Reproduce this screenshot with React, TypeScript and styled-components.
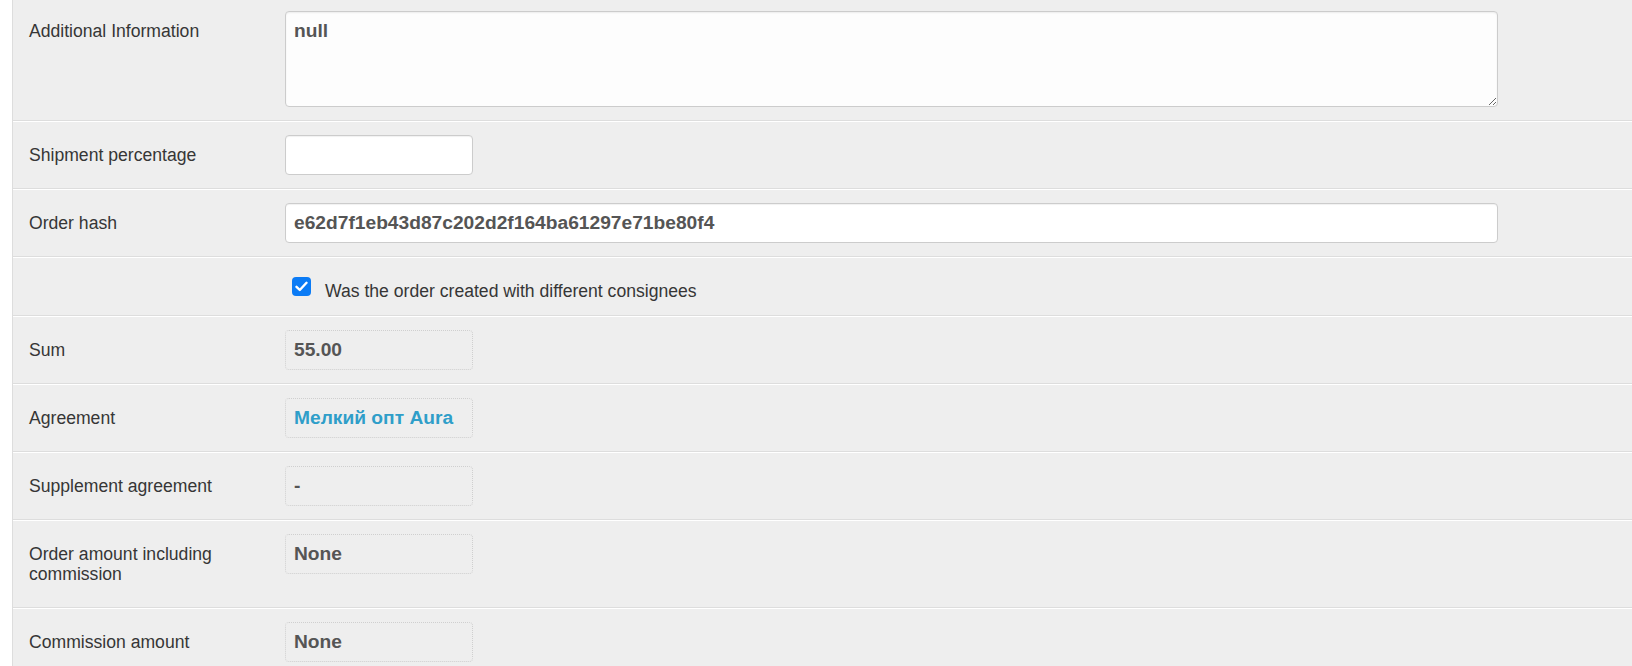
import React from "react";
import styled, { createGlobalStyle } from "styled-components";

const Global = createGlobalStyle`
  html, body {
    margin: 0;
    padding: 0;
    background: #ffffff;
    overflow: hidden;
  }
  body {
    font-family: "Liberation Sans", Arial, Helvetica, sans-serif;
  }
  * { box-sizing: border-box; }
`;

const Page = styled.div`
  padding-left: 12px;
`;

const Fieldset = styled.div`
  margin-top: -3px;
  border-left: 1px solid #dddddd;
  background: #eeeeee;
`;

const Row = styled.div<{ $indent?: boolean }>`
  display: flex;
  align-items: flex-start;
  padding: 13px 16px;
  padding-left: ${(p) => (p.$indent ? "279px" : "16px")};
  border-top: 1px solid #ffffff;
  border-bottom: 1px solid #dddddd;
`;

const Label = styled.div`
  flex: 0 0 256px;
  padding: 10px 20px 10px 0;
  font-size: 17.6px;
  line-height: 20px;
  color: #363636;
`;

const valueFont = `
  font-family: "Liberation Sans", Arial, Helvetica, sans-serif;
  font-weight: bold;
  font-size: 19.2px;
  color: #555555;
`;

const TextArea = styled.textarea`
  ${valueFont}
  display: block;
  width: 1213px;
  height: 96px;
  padding: 8px 8px;
  line-height: 22px;
  background: #fdfdfd;
  border: 1px solid #cccccc;
  border-radius: 4px;
  box-shadow: inset 0 1px 2px rgba(0, 0, 0, 0.07);
  outline: none;
  resize: both;
  margin: 0;
`;

const TextInput = styled.input<{ $wide?: boolean }>`
  ${valueFont}
  display: block;
  width: ${(p) => (p.$wide ? "1213px" : "188px")};
  height: 40px;
  padding: 0 8px;
  background: #ffffff;
  border: 1px solid #cccccc;
  border-radius: 4px;
  box-shadow: inset 0 1px 1px rgba(0, 0, 0, 0.06);
  outline: none;
  margin: 0;
`;

const ReadOnly = styled.div<{ $link?: boolean }>`
  ${valueFont}
  width: 188px;
  height: 40px;
  padding: 0 8px;
  display: flex;
  align-items: center;
  border: 1px dotted #cfcfcf;
  border-radius: 4px;
  color: ${(p) => (p.$link ? "#2f9ec9" : "#555555")};
  white-space: nowrap;
`;

const CheckLine = styled.label`
  display: flex;
  align-items: flex-start;
  height: 31px;
  gap: 14px;
  font-size: 17.6px;
  line-height: 20px;
  color: #363636;
`;

const CheckText = styled.span`
  padding-top: 10px;
`;

const CheckBox = styled.span`
  width: 19px;
  height: 19px;
  margin-top: 6px;
  border-radius: 4px;
  background: #0b7bf5;
  display: inline-flex;
  align-items: center;
  justify-content: center;
  flex: 0 0 auto;
`;

const Check = () => (
  <CheckBox>
    <svg width="13" height="11" viewBox="0 0 13 11">
      <path
        d="M1.5 5.8 L4.8 9 L11.5 1.8"
        fill="none"
        stroke="#ffffff"
        strokeWidth="2.4"
        strokeLinecap="round"
        strokeLinejoin="round"
      />
    </svg>
  </CheckBox>
);

export default function App() {
  return (
    <>
      <Global />
      <Page>
        <Fieldset>
          <Row>
            <Label>Additional Information</Label>
            <TextArea defaultValue="null" />
          </Row>
          <Row>
            <Label>Shipment percentage</Label>
            <TextInput defaultValue="" />
          </Row>
          <Row>
            <Label>Order hash</Label>
            <TextInput $wide defaultValue="e62d7f1eb43d87c202d2f164ba61297e71be80f4" />
          </Row>
          <Row $indent>
            <CheckLine>
              <Check />
              <CheckText>Was the order created with different consignees</CheckText>
            </CheckLine>
          </Row>
          <Row>
            <Label>Sum</Label>
            <ReadOnly>55.00</ReadOnly>
          </Row>
          <Row>
            <Label>Agreement</Label>
            <ReadOnly $link>Мелкий опт Aura</ReadOnly>
          </Row>
          <Row>
            <Label>Supplement agreement</Label>
            <ReadOnly>-</ReadOnly>
          </Row>
          <Row>
            <Label>Order amount including commission</Label>
            <ReadOnly>None</ReadOnly>
          </Row>
          <Row>
            <Label>Commission amount</Label>
            <ReadOnly>None</ReadOnly>
          </Row>
        </Fieldset>
      </Page>
    </>
  );
}
